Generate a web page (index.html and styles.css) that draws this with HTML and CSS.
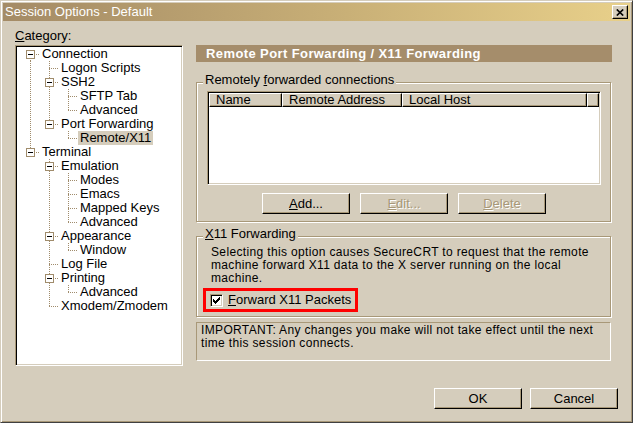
FILE: index.html
```html
<!DOCTYPE html>
<html lang="en">
<head>
    <meta charset="UTF-8">
    <title>Session Options - Default</title>
    <link rel="stylesheet" href="styles.css">
</head>
<body>
<div class="dlg">
    <div class="titlebar">
        <span class="title-text">Session Options - Default</span>
        <span class="close">
            <svg width="8" height="7" viewBox="0 0 8 7"><path d="M0.8 0.5 L7.2 6.5 M7.2 0.5 L0.8 6.5" stroke="#000" stroke-width="1.7" fill="none"/></svg>
        </span>
    </div>

    <div class="content">
        <div class="main">
            <div class="side">
                <div class="cat-label"><u>C</u>ategory:</div>
                <div class="tree">
                    <div class="row"><span class="g f"><span class="box"></span></span><span class="lbl">Connection</span></div>
                    <div class="row"><span class="g v"></span><span class="g t"></span><span class="lbl">Logon Scripts</span></div>
                    <div class="row"><span class="g v"></span><span class="g t"><span class="box"></span></span><span class="lbl">SSH2</span></div>
                    <div class="row"><span class="g v"></span><span class="g v"></span><span class="g t"></span><span class="lbl">SFTP Tab</span></div>
                    <div class="row"><span class="g v"></span><span class="g v"></span><span class="g l"></span><span class="lbl">Advanced</span></div>
                    <div class="row"><span class="g v"></span><span class="g l"><span class="box"></span></span><span class="lbl">Port Forwarding</span></div>
                    <div class="row"><span class="g v"></span><span class="g"></span><span class="g l"></span><span class="lbl sel">Remote/X11</span></div>
                    <div class="row"><span class="g l"><span class="box"></span></span><span class="lbl">Terminal</span></div>
                    <div class="row"><span class="g"></span><span class="g t"><span class="box"></span></span><span class="lbl">Emulation</span></div>
                    <div class="row"><span class="g"></span><span class="g v"></span><span class="g t"></span><span class="lbl">Modes</span></div>
                    <div class="row"><span class="g"></span><span class="g v"></span><span class="g t"></span><span class="lbl">Emacs</span></div>
                    <div class="row"><span class="g"></span><span class="g v"></span><span class="g t"></span><span class="lbl">Mapped Keys</span></div>
                    <div class="row"><span class="g"></span><span class="g v"></span><span class="g l"></span><span class="lbl">Advanced</span></div>
                    <div class="row"><span class="g"></span><span class="g t"><span class="box"></span></span><span class="lbl">Appearance</span></div>
                    <div class="row"><span class="g"></span><span class="g v"></span><span class="g l"></span><span class="lbl">Window</span></div>
                    <div class="row"><span class="g"></span><span class="g t"></span><span class="lbl">Log File</span></div>
                    <div class="row"><span class="g"></span><span class="g t"><span class="box"></span></span><span class="lbl">Printing</span></div>
                    <div class="row"><span class="g"></span><span class="g v"></span><span class="g l"></span><span class="lbl">Advanced</span></div>
                    <div class="row"><span class="g"></span><span class="g l"></span><span class="lbl">Xmodem/Zmodem</span></div>
                </div>
            </div>

            <div class="page">
                <div class="page-head">Remote Port Forwarding / X11 Forwarding</div>

                <fieldset class="group">
                    <legend>Remotely <u>f</u>orwarded connections</legend>
                    <div class="list">
                        <div class="list-head">
                            <span class="col c-name">Name</span>
                            <span class="col c-addr">Remote Address</span>
                            <span class="col c-host">Local Host</span>
                            <span class="col c-fill"></span>
                        </div>
                    </div>
                    <div class="btn-row">
                        <button class="btn"><u>A</u>dd...</button>
                        <button class="btn" disabled><u>E</u>dit...</button>
                        <button class="btn" disabled><u>D</u>elete</button>
                    </div>
                </fieldset>

                <fieldset class="group x11">
                    <legend><u>X</u>11 Forwarding</legend>
                    <p class="desc">Selecting this option causes SecureCRT to request that the remote<br>machine forward X11 data to the X server running on the local<br>machine.</p>
                    <div class="check-row">
                        <span class="checkbox">
                            <svg width="7" height="7" viewBox="0 0 7 7" shape-rendering="crispEdges" fill="#000">
                                <rect x="0" y="2" width="1" height="3"/>
                                <rect x="1" y="3" width="1" height="3"/>
                                <rect x="2" y="4" width="1" height="3"/>
                                <rect x="3" y="3" width="1" height="3"/>
                                <rect x="4" y="2" width="1" height="3"/>
                                <rect x="5" y="1" width="1" height="3"/>
                                <rect x="6" y="0" width="1" height="3"/>
                            </svg>
                        </span>
                        <span><u>F</u>orward X11 Packets</span>
                    </div>
                </fieldset>

                <div class="note">IMPORTANT: Any changes you make will not take effect until the next<br>time this session connects.</div>
            </div>
        </div>

        <div class="footer">
            <button class="btn">OK</button>
            <button class="btn">Cancel</button>
        </div>
    </div>
</div>
</body>
</html>
```

FILE: styles.css
```css
:root {
    --face: #d5cdbc;
    --shadow: #a89878;
    --dots: #a08c6c;
    --dot-v: repeating-linear-gradient(to bottom, var(--dots) 0 1px, transparent 1px 2px);
    --dot-h: repeating-linear-gradient(to right, var(--dots) 0 1px, transparent 1px 2px);
}

html, body { margin: 0; padding: 0; background: var(--face); }

.dlg {
    width: 633px;
    height: 423px;
    box-sizing: border-box;
    border: 1px solid;
    border-color: var(--face) #404040 #404040 var(--face);
    box-shadow: inset 1px 1px #fff, inset -1px -1px var(--shadow);
    padding: 2px;
    background: var(--face);
    display: flex;
    flex-direction: column;
    font: 13px/14px "Liberation Sans", Arial, sans-serif;
    color: #000;
}

/* заголовок окна */
.titlebar {
    height: 18px;
    display: flex;
    align-items: center;
    padding: 0 2px;
    background: linear-gradient(to right, #a48b66, #c9b077 55%, #e8d08a);
    color: #fff;
}
.title-text { flex: 1; }
.close {
    width: 16px;
    height: 14px;
    box-sizing: border-box;
    display: flex;
    align-items: center;
    justify-content: center;
    background: var(--face);
    border: 1px solid;
    border-color: #fff #000 #000 #fff;
    box-shadow: inset -1px -1px var(--shadow);
}
.close svg { display: block; }

.content {
    flex: 1;
    display: flex;
    flex-direction: column;
    padding: 8px 12px 11px 12px;
}
.main { display: flex; gap: 13px; }

/* дерево категорий */
.side { width: 168px; flex: none; }
.cat-label { margin-bottom: 2px; }
.tree {
    height: 321px;
    box-sizing: border-box;
    background: #fff;
    border: 1px solid;
    border-color: var(--shadow) #fff #fff var(--shadow);
    box-shadow: inset 1px 1px #000, inset -1px -1px var(--face);
    padding: 1px 0 0 5px;
}
.row { display: flex; height: 14px; }
.g {
    width: 19px;
    height: 14px;
    flex: none;
    display: flex;
    align-items: center;
    padding-left: 5px;
    box-sizing: border-box;
}
.g.v { background: var(--dot-v) 9px 0 / 1px 14px no-repeat; }
.g.t { background: var(--dot-v) 9px 0 / 1px 14px no-repeat, var(--dot-h) 9px 7px / 10px 1px no-repeat; }
.g.l { background: var(--dot-v) 9px 0 / 1px 8px no-repeat, var(--dot-h) 9px 7px / 10px 1px no-repeat; }
.g.f { background: var(--dot-v) 9px 7px / 1px 7px no-repeat, var(--dot-h) 9px 7px / 10px 1px no-repeat; }
.box {
    width: 9px;
    height: 9px;
    box-sizing: border-box;
    border: 1px solid #a08c6c;
    background: linear-gradient(#000, #000) 1px 3px / 5px 1px no-repeat, #fff;
    margin-top: 1px;
}
.lbl { padding: 0 2px; white-space: nowrap; }
.lbl.sel { background: var(--face); }

/* правая часть */
.page {
    flex: 1;
    padding-top: 16px;
    margin-right: 6px;
    display: flex;
    flex-direction: column;
}
.page-head {
    height: 17px;
    line-height: 17px;
    padding-left: 10px;
    background: #a58d6b;
    color: #fff;
    font-weight: bold;
    letter-spacing: 0.4px;
}

.group {
    margin: 11px 1px 0 0;
    padding: 0 9px 7px 10px;
    border: 1px solid var(--shadow);
    box-shadow: inset 1px 1px #fff, 1px 1px #fff;
    min-width: 0;
}
.group legend {
    margin-left: -4px;
    padding: 0 2px 4px;
    background: var(--face);
    line-height: 14px;
}

.list {
    height: 94px;
    box-sizing: border-box;
    background: #fff;
    border: 1px solid;
    border-color: var(--shadow) #fff #fff var(--shadow);
    box-shadow: inset 1px 1px #000, inset -1px -1px var(--face);
    padding: 1px 1px 0 1px;
}
.list-head { display: flex; }
.col {
    box-sizing: border-box;
    height: 14px;
    line-height: 12px;
    padding-left: 6px;
    background: var(--face);
    border: 1px solid;
    border-color: #fff #000 #000 #fff;
    box-shadow: inset -1px -1px var(--shadow);
    white-space: nowrap;
}
.c-name { width: 73px; }
.c-addr { width: 120px; }
.c-host { width: 185px; }
.c-fill { flex: 1; }

.btn-row {
    display: flex;
    justify-content: center;
    gap: 10px;
    margin-top: 8px;
}
.btn {
    width: 88px;
    height: 21px;
    padding: 0;
    font: inherit;
    color: #000;
    background: var(--face);
    border: 1px solid;
    border-color: #fff #000 #000 #fff;
    box-shadow: inset -1px -1px var(--shadow);
}
.btn:disabled {
    color: var(--shadow);
    text-shadow: 1px 1px #fff;
}

.x11 { margin-top: 5px; padding-bottom: 4px; }
.desc {
    margin: 1px 0 0 4px;
    font-size: 12px;
    line-height: 13px;
    letter-spacing: 0.35px;
}
.check-row {
    display: flex;
    align-items: center;
    gap: 5px;
    width: fit-content;
    margin: 3px 0 0 -4px;
    padding: 2px 4px;
    border: 3px solid #f00;
}
.checkbox {
    width: 13px;
    height: 13px;
    box-sizing: border-box;
    display: flex;
    align-items: center;
    justify-content: center;
    background: #fff;
    border: 1px solid;
    border-color: var(--shadow) #fff #fff var(--shadow);
    box-shadow: inset 1px 1px #000, inset -1px -1px var(--face);
}
.checkbox svg { display: block; }

.note {
    margin: 5px 1px 0 0;
    height: 39px;
    box-sizing: border-box;
    padding: 1px 4px;
    font-size: 12px;
    line-height: 13px;
    letter-spacing: 0.35px;
    border: 1px solid;
    border-color: var(--shadow) #fff #fff var(--shadow);
}

.footer {
    margin-top: auto;
    display: flex;
    justify-content: flex-end;
    gap: 8px;
}
```
